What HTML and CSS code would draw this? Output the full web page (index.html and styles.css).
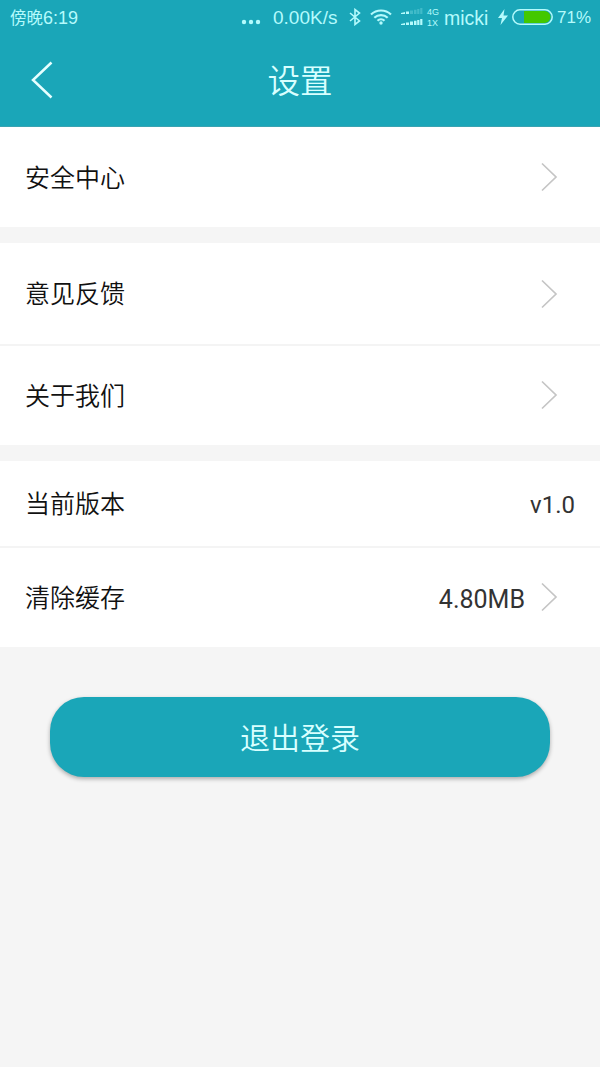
FILE: index.html
```
<!DOCTYPE html>
<html lang="zh-CN">
<head>
<meta charset="UTF-8" />
<meta name="viewport" content="width=device-width, initial-scale=1" />
<title>设置</title>
<link rel="stylesheet" href="styles.css">
</head>
<body>
<header class="header">
  <div class="status-bar">
    <span class="time">傍晚<span>6:19</span></span>
    <svg class="dots" width="20" height="6" viewBox="0 0 20 6" aria-hidden="true">
      <circle cx="3" cy="3" r="2.2"></circle>
      <circle cx="10" cy="3" r="2.2"></circle>
      <circle cx="17" cy="3" r="2.2"></circle>
    </svg>
    <span class="net-speed">0.00K/s</span>
    <svg class="bluetooth" width="12" height="18" viewBox="0 0 12 18" aria-hidden="true">
      <path d="M1 5l9.500 8L6 16.500v-15L10.500 5 1 13"></path>
    </svg>
    <svg class="wifi" width="22" height="16" viewBox="0 0 22 16" aria-hidden="true">
      <path d="M1 5.500a14.500 14.500 0 0 1 20 0M4.300 8.800a9.700 9.700 0 0 1 13.400 0M7.500 11.800a5 5 0 0 1 7 0"></path>
      <circle cx="11" cy="14" r="1.700"></circle>
    </svg>
    <svg class="signal" width="22" height="18" viewBox="0 0 22 18" aria-hidden="true">
      <path d="M0 6v-1l4-1v2zM5 6V3.500h3V6zM0 17v-1l4-1v2zM5 17v-2.500h3V17zM9 17v-3.500h3V17zM13 17v-4.200h2.500V17zM16.200 17v-5h2.200V17zM19.200 17v-6h2.200v6z"></path>
      <path class="weak" d="M9 6V2.500h3V6zM13 6V1.800h2.500V6zM16.200 6V1h2.200v5zM19.200 6V0h2.200v6z"></path>
    </svg>
    <span class="net-type"><span>4G</span><span>1X</span></span>
    <span class="carrier">micki</span>
    <svg class="bolt" width="10" height="16" viewBox="0 0 10 16" aria-hidden="true">
      <path d="M6.500 0L0 9h4L2.500 16 10 6.500H5.500z"></path>
    </svg>
    <svg class="battery" width="41" height="16" viewBox="0 0 41 16" aria-hidden="true">
      <path class="level" d="M12 2h20.500a6 6 0 0 1 0 12H12z"></path>
      <rect class="shell" x=".8" y=".8" width="39.400" height="14.400" rx="7.200"></rect>
    </svg>
    <span class="percent">71%</span>
  </div>
  <div class="title-bar">
    <svg class="back" width="24" height="40" viewBox="0 0 24 40" aria-hidden="true">
      <path d="M21.500 2.500L3 20l18.500 17.500"></path>
    </svg>
    <h1>设置</h1>
  </div>
</header>

<main>
  <ul class="group">
    <li class="row">
      <span class="label">安全中心</span>
      <svg class="arrow" width="18" height="30" viewBox="0 0 18 30"><path d="M2 1.500L16 15 2 28.500"></path></svg>
    </li>
  </ul>
  <ul class="group">
    <li class="row">
      <span class="label">意见反馈</span>
      <svg class="arrow" width="18" height="30" viewBox="0 0 18 30"><path d="M2 1.500L16 15 2 28.500"></path></svg>
    </li>
    <li class="row">
      <span class="label">关于我们</span>
      <svg class="arrow" width="18" height="30" viewBox="0 0 18 30"><path d="M2 1.500L16 15 2 28.500"></path></svg>
    </li>
  </ul>
  <ul class="group">
    <li class="row row-short">
      <span class="label">当前版本</span>
      <span class="value version">v1.0</span>
    </li>
    <li class="row">
      <span class="label">清除缓存</span>
      <span class="value">4.80MB</span>
      <svg class="arrow" width="18" height="30" viewBox="0 0 18 30"><path d="M2 1.500L16 15 2 28.500"></path></svg>
    </li>
  </ul>
  <button class="logout" type="button">退出登录</button>
</main>
</body>
</html>
```
FILE: styles.css
```
*, *::before, *::after {
  box-sizing: border-box;
}
body {
  margin: 0;
  min-height: 100vh;
  background: #f5f5f5;
  color: #111;
  font-family: Roboto, "Noto Sans CJK SC", sans-serif;
}
svg {
  display: block;
  flex: none;
}

/* Header */
.header {
  height: 127px;
  background: #1aa6b8;
  border-bottom: 1px solid #3aa3b1;
}
.status-bar {
  display: flex;
  align-items: center;
  height: 34px;
  padding: 0 10px;
  color: #b4fafc;
  font-family: "Liberation Sans", "Noto Sans CJK SC", sans-serif;
  font-size: 18px;
  line-height: 34px;
  white-space: nowrap;
}
.status-bar > * {
  flex: none;
}
.status-bar svg {
  fill: #b4fafc;
}
.time {
  width: 231px;
  padding-top: 2px;
  font-size: 16.500px;
}
.time span {
  font-size: 18px;
}
.dots {
  margin-top: 9px;
}
.net-speed {
  width: 76px;
  margin-left: 12px;
  padding-top: 1px;
  font-size: 19px;
}
.status-bar .bluetooth {
  fill: none;
  stroke: #b4fafc;
  stroke-width: 1.6;
}
.wifi {
  margin-left: 9px;
}
.wifi path {
  fill: none;
  stroke: #b4fafc;
  stroke-width: 2.2;
}
.signal {
  margin-left: 9px;
}
.signal .weak {
  opacity: 0.25;
}
.net-type {
  display: flex;
  flex-direction: column;
  width: 17px;
  margin-left: 4px;
  padding-top: 1px;
  font-size: 9px;
  line-height: 11px;
}
.carrier {
  width: 54px;
  padding-top: 1px;
  font-size: 19.500px;
}
.battery {
  margin-left: 4px;
}
.battery .level {
  fill: #43c800;
}
.battery .shell {
  fill: none;
  stroke: #b4fafc;
  stroke-width: 1.5;
}
.percent {
  margin-left: 4px;
  padding-top: 1px;
  font-size: 17px;
}
.title-bar {
  display: grid;
  grid-template-columns: 60px 1fr 60px;
  align-items: center;
  height: 92px;
}
.back {
  margin-left: 30px;
}
.back path {
  fill: none;
  stroke: #e6ffff;
  stroke-width: 2.5;
}
h1 {
  margin: 0 0 3px;
  color: #d8ffff;
  font-size: 32.500px;
  font-weight: 350;
  text-align: center;
}

/* Setting list */
.group {
  margin: 0 0 16px;
  padding: 0;
  background: #fff;
  list-style: none;
}
.row {
  display: flex;
  align-items: center;
  height: 101px;
  padding: 0 25px;
  font-size: 25px;
}
.group:first-child .row {
  height: 100px;
}
.row + .row {
  border-top: 2px solid #f4f4f4;
}
.row-short {
  height: 85px;
}
.label {
  margin-bottom: 3px;
  font-weight: 350;
}
.value {
  margin-left: auto;
  padding-top: 3px;
  color: #333;
}
.version {
  font-size: 24px;
}
.arrow {
  margin-left: auto;
  margin-right: 17px;
}
.row + .row .arrow {
  margin-bottom: 2px;
}
.value + .arrow {
  margin-left: 15px;
}
.arrow path {
  fill: none;
  stroke: #c5c5c5;
  stroke-width: 1.7;
}

.logout {
  display: block;
  width: 500px;
  height: 80px;
  margin: 50px auto 0;
  padding: 0 0 2px;
  border: none;
  border-radius: 34px;
  background: #1aa6b8;
  box-shadow: 0 2px 4px rgba(0, 0, 0, 0.3);
  color: #d8ffff;
  font-family: inherit;
  font-size: 30px;
  font-weight: 350;
}
```
